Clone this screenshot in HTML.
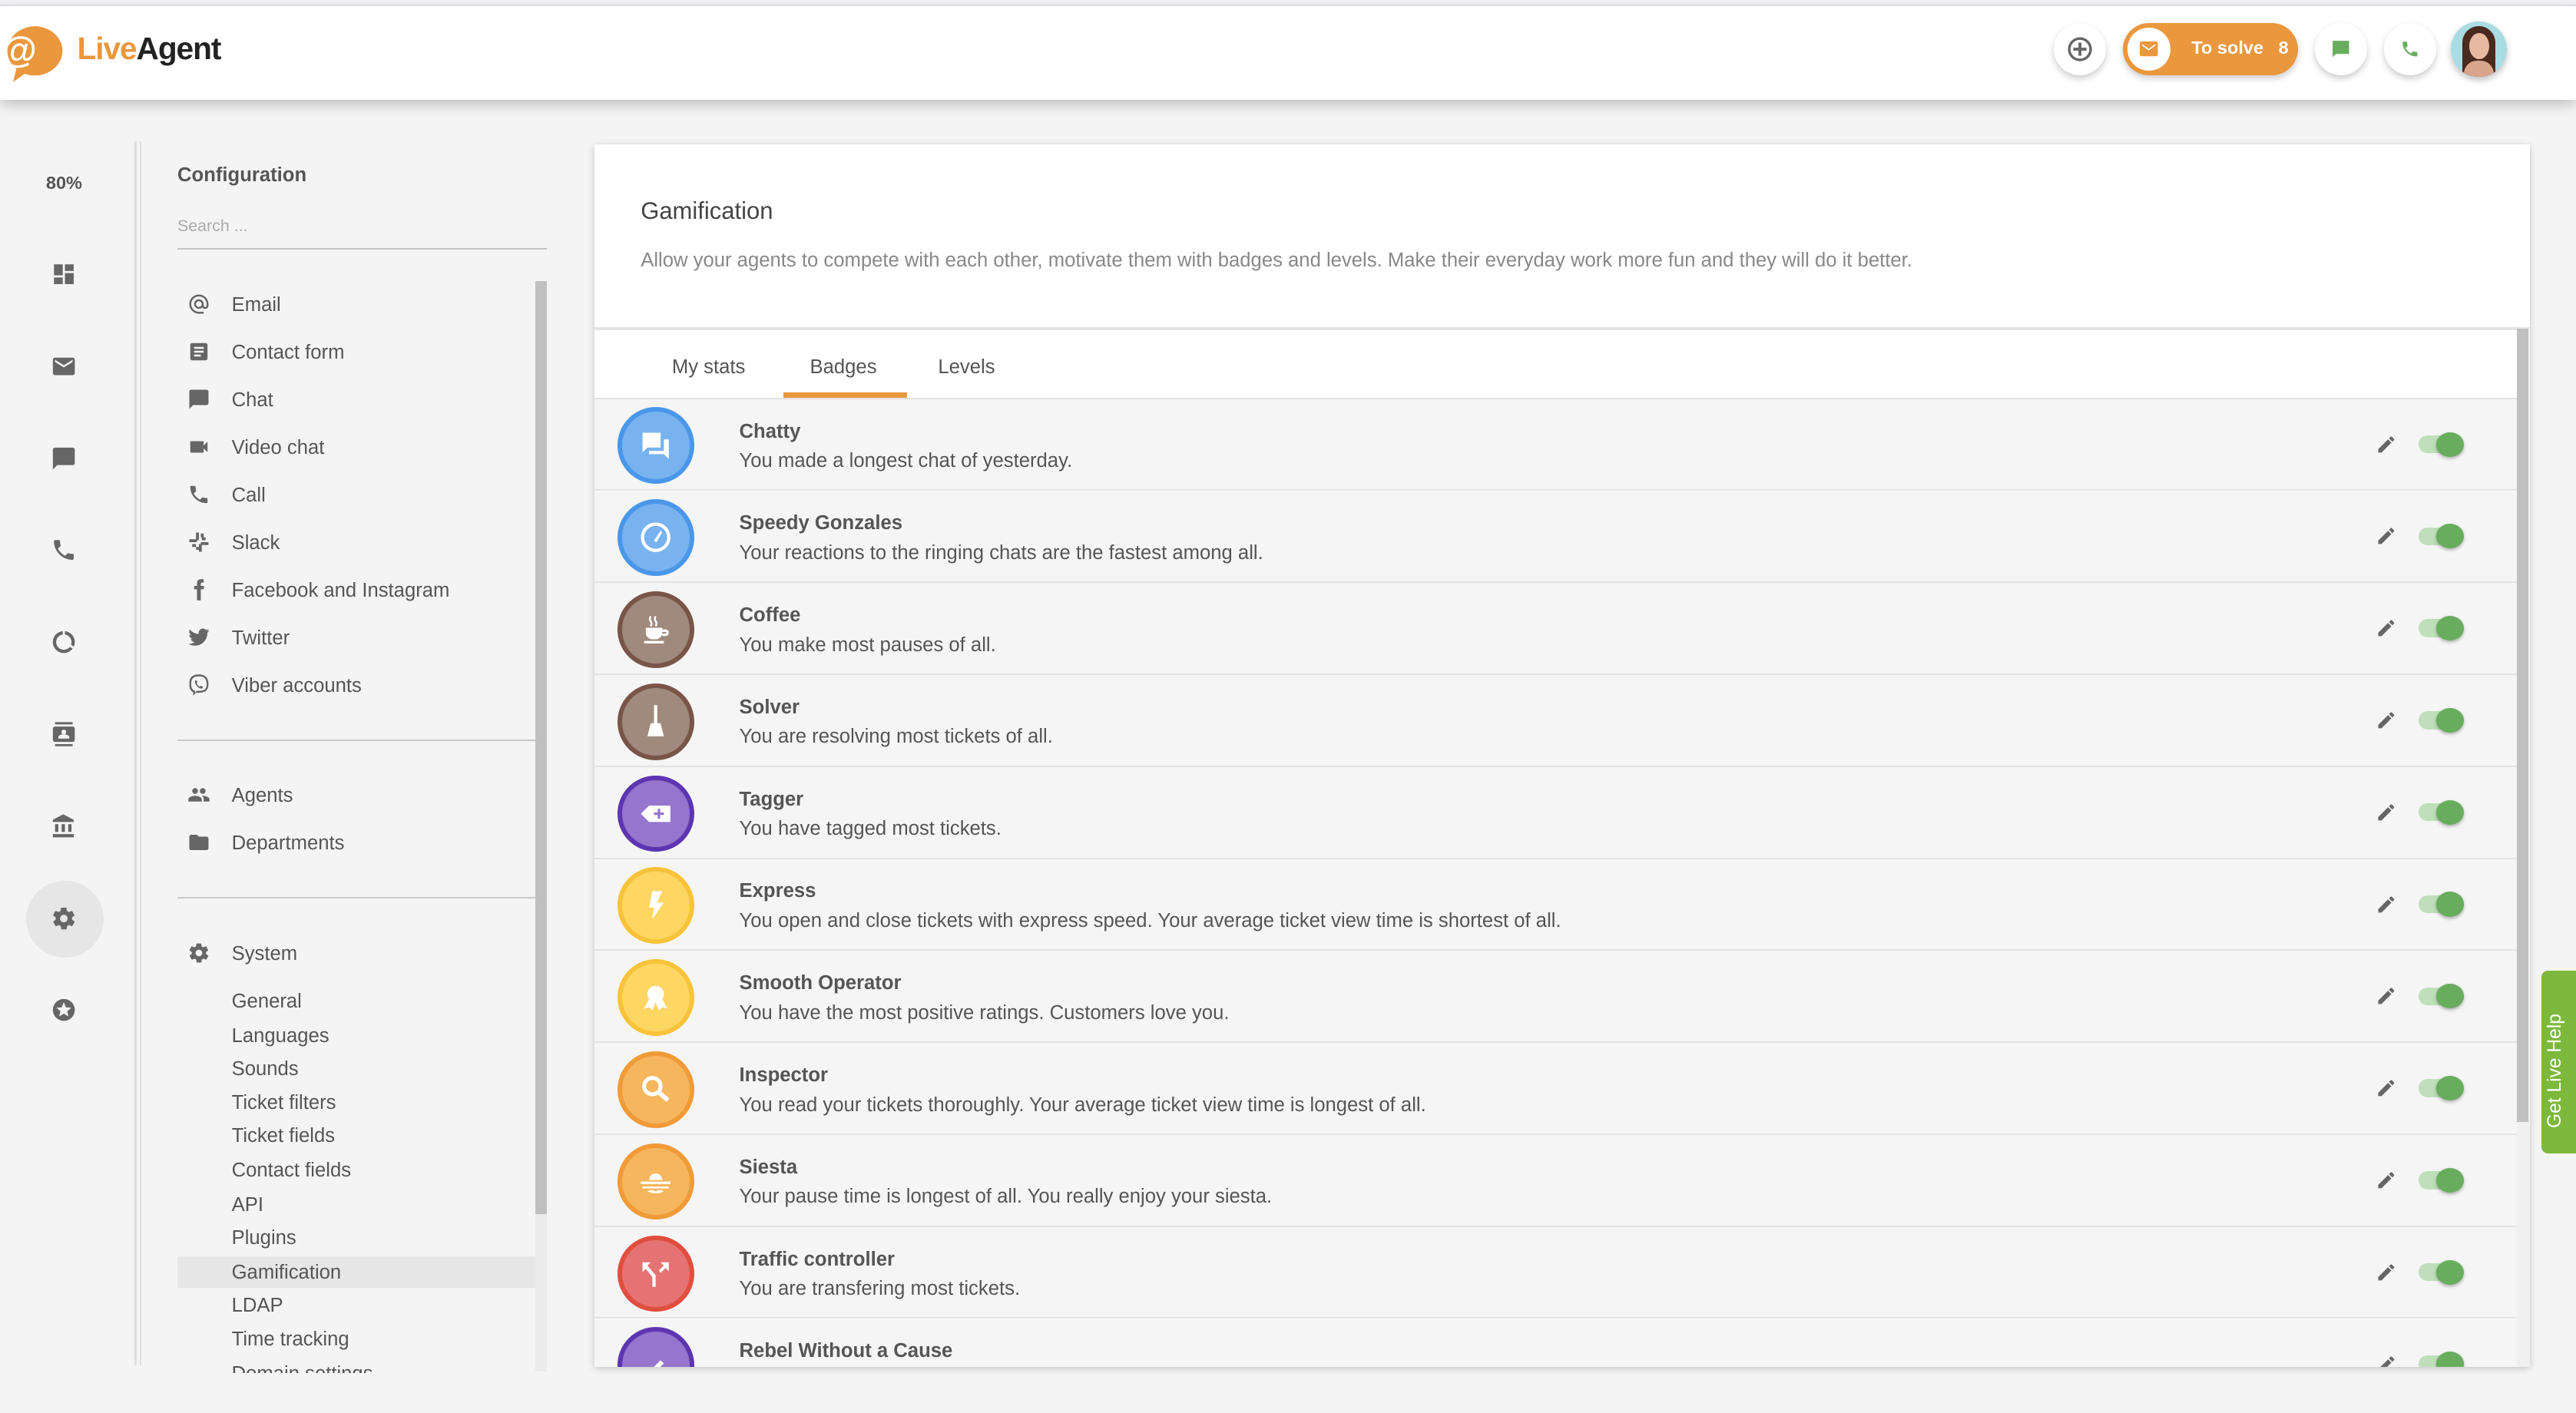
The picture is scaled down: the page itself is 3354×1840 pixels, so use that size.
<!DOCTYPE html>
<html><head><meta charset="utf-8"><style>
html,body{margin:0;padding:0;}
body{width:3354px;height:1840px;overflow:hidden;background:#f4f4f4;font-family:"Liberation Sans",sans-serif;}
#w{zoom:2.139;width:1568px;height:860px;position:relative;overflow:hidden;color:#555;}
.abs{position:absolute;}
.hdr{left:0;top:3px;width:1568px;height:57px;background:#fff;border-top:1px solid #dcdce4;box-shadow:0 3px 8px rgba(0,0,0,.22);z-index:5;}
.cb{position:absolute;width:32px;height:32px;border-radius:50%;background:#fff;box-shadow:0 2px 4px rgba(0,0,0,.2);display:flex;align-items:center;justify-content:center;}
.rail svg{position:absolute;left:31px;width:16px;height:16px;fill:#666;}
.li{position:absolute;left:141px;font-size:12px;color:#555;margin-top:1px;}
.li2{position:absolute;left:141px;font-size:12px;color:#555;margin-top:1px;}
.ic{position:absolute;left:114px;width:14px;height:14px;fill:#666;}
.row{position:absolute;left:362px;width:1170px;height:55px;background:#f5f5f5;border-bottom:1px solid #e2e2e2;}
.row .c{position:absolute;left:14px;top:5px;width:41px;height:41px;border-radius:50%;border:3px solid;display:flex;align-items:center;justify-content:center;}
.row .c svg{width:24px;height:24px;fill:#fff;}
.row .n{position:absolute;left:88px;top:13px;font-size:12px;font-weight:bold;color:#555;}
.row .d{position:absolute;left:88px;top:31px;font-size:12px;color:#555;}
.row .p{position:absolute;left:1084px;top:21px;width:13px;height:13px;fill:#666;}
.row .t{position:absolute;left:1110px;top:22px;width:28px;height:11px;border-radius:6px;background:#bfdfbb;}
.row .t:after{content:"";position:absolute;left:11px;top:-2px;width:17px;height:15px;border-radius:50%;background:#68ad5e;box-shadow:0 1px 2px rgba(0,0,0,.3);}
</style></head><body><div id="w">
<div class="abs hdr">
 <svg class="abs" style="left:1px;top:11px" width="40" height="36" viewBox="0 0 40 36"><path d="M20 1a17 15 0 1 1 -6 29l-7 5 2-8A17 15 0 0 1 20 1z" fill="#ea973d"/><text x="0" y="23" font-size="22" font-family="Liberation Sans" fill="#fff" font-weight="bold">@</text></svg>
 <div class="abs" style="left:47px;top:15px;font-size:19px;font-weight:bold;letter-spacing:-0.5px"><span style="color:#ea973d">Live</span><span style="color:#222">Agent</span></div>
 <div class="cb" style="left:1250px;top:10px"><svg width="16" height="16" viewBox="0 0 16 16"><circle cx="8" cy="8" r="6.5" fill="none" stroke="#666" stroke-width="1.6"/><path d="M8 4v8M4 8h8" stroke="#666" stroke-width="1.8"/></svg></div>
 <div class="abs" style="left:1292px;top:10px;width:107px;height:32px;border-radius:16px;background:#ea973d;box-shadow:0 2px 4px rgba(0,0,0,.2)">
  <div style="position:absolute;left:3px;top:3px;width:26px;height:26px;border-radius:50%;background:#fff;display:flex;align-items:center;justify-content:center"><svg width="11" height="9" viewBox="0 0 11 9"><rect width="11" height="9" rx="1" fill="#ea973d"/><path d="M1.5 2l4 3 4-3" stroke="#fff" fill="none" stroke-width=".8"/></svg></div>
  <div style="position:absolute;left:42px;top:9px;font-size:11px;font-weight:bold;color:#fff">To solve &nbsp;&nbsp;8</div></div>
 <div class="cb" style="left:1409px;top:10px"><svg width="12" height="12" viewBox="0 0 12 12"><path d="M1 1h10v8H3l-2 2z" fill="#68ad5e"/></svg></div>
 <div class="cb" style="left:1451px;top:10px"><svg width="12" height="12" viewBox="0 0 24 24"><path d="M6.6 10.8c1.4 2.8 3.8 5.1 6.6 6.6l2.2-2.2c.3-.3.7-.4 1-.2 1.1.4 2.3.6 3.6.6.6 0 1 .4 1 1V20c0 .6-.4 1-1 1C10.6 21 3 13.4 3 4c0-.6.4-1 1-1h3.5c.6 0 1 .4 1 1 0 1.3.2 2.5.6 3.6.1.3 0 .7-.2 1z" fill="#68ad5e"/></svg></div>
 <div class="abs" style="left:1492px;top:9px;width:34px;height:34px;border-radius:50%;background:#a9dde3;overflow:hidden;box-shadow:0 2px 4px rgba(0,0,0,.25)"><div style="position:absolute;left:7px;top:3px;width:20px;height:34px;border-radius:10px 10px 0 0;background:#4a2a1e"></div><div style="position:absolute;left:11px;top:7px;width:12px;height:16px;border-radius:50%;background:#e7b9a0"></div><div style="position:absolute;left:8px;top:24px;width:18px;height:12px;border-radius:8px 8px 0 0;background:#d8a48c"></div></div>
</div>
<div class="rail">
 <div class="abs" style="left:28px;top:105px;font-size:11px;font-weight:bold;color:#555">80%</div>
 <svg style="top:159px" viewBox="0 0 24 24"><path d="M3 13h8V3H3zm0 8h8v-6H3zm10 0h8V11h-8zm0-18v6h8V3z"/></svg>
 <svg style="top:215px" viewBox="0 0 24 24"><path d="M20 4H4c-1.1 0-2 .9-2 2v12c0 1.1.9 2 2 2h16c1.1 0 2-.9 2-2V6c0-1.1-.9-2-2-2zm0 4l-8 5-8-5V6l8 5 8-5z"/></svg>
 <svg style="top:271px" viewBox="0 0 24 24"><path d="M20 2H4c-1.1 0-2 .9-2 2v18l4-4h14c1.1 0 2-.9 2-2V4c0-1.1-.9-2-2-2z"/></svg>
 <svg style="top:327px" viewBox="0 0 24 24"><path d="M6.6 10.8c1.4 2.8 3.8 5.1 6.6 6.6l2.2-2.2c.3-.3.7-.4 1-.2 1.1.4 2.3.6 3.6.6.6 0 1 .4 1 1V20c0 .6-.4 1-1 1C10.6 21 3 13.4 3 4c0-.6.4-1 1-1h3.5c.6 0 1 .4 1 1 0 1.3.2 2.5.6 3.6.1.3 0 .7-.2 1z"/></svg>
 <svg style="top:383px" viewBox="0 0 24 24"><path d="M13 2.05v3.03c3.39.49 6 3.39 6 6.92 0 .9-.18 1.750-.48 2.54l2.6 1.53c.56-1.24.88-2.62.88-4.070 0-5.18-3.95-9.45-9-9.95zM12 19c-3.87 0-7-3.13-7-7 0-3.530 2.61-6.43 6-6.92V2.05c-5.06.5-9 4.76-9 9.95 0 5.52 4.47 10 9.99 10 3.31 0 6.24-1.61 8.06-4.09l-2.6-1.53C16.17 17.98 14.21 19 12 19z"/></svg>
 <svg style="top:439px" viewBox="0 0 24 24"><path d="M4 1h16v2H4zm0 20h16v2H4zM20 5H4c-1.1 0-2 .9-2 2v10c0 1.1.9 2 2 2h16c1.1 0 2-.9 2-2V7c0-1.1-.9-2-2-2zm-8 2.8a2.2 2.2 0 1 1 0 4.4 2.2 2.2 0 0 1 0-4.4zM17 16H7v-1.5c0-1.7 3.3-2.5 5-2.5s5 .8 5 2.5z"/></svg>
 <svg style="top:495px" viewBox="0 0 24 24"><path d="M4 10v7h3v-7zm6 0v7h3v-7zM2 22h19v-3H2zm14-12v7h3v-7zM11.5 1L2 6v2h19V6z"/></svg>
 <div class="abs" style="left:16px;top:536px;width:47px;height:47px;border-radius:50%;background:#e6e6e6"></div>
 <svg style="top:551px;z-index:1" viewBox="0 0 24 24"><path d="M19.4 13c0-.3.1-.6.1-1s0-.7-.1-1l2.1-1.6c.2-.2.2-.4.1-.6l-2-3.5c-.1-.2-.4-.3-.6-.2l-2.5 1c-.5-.4-1.1-.7-1.7-1l-.4-2.6c0-.2-.2-.4-.5-.4h-4c-.2 0-.5.2-.5.4l-.4 2.6c-.6.3-1.2.6-1.7 1l-2.5-1c-.2-.1-.5 0-.6.2l-2 3.5c-.1.2-.1.5.1.6L4.6 11c0 .3-.1.6-.1 1s0 .7.1 1l-2.1 1.6c-.2.2-.2.4-.1.6l2 3.5c.1.2.4.3.6.2l2.5-1c.5.4 1.1.7 1.7 1l.4 2.6c0 .2.2.4.5.4h4c.2 0 .5-.2.5-.4l.4-2.6c.6-.3 1.2-.6 1.7-1l2.5 1c.2.1.5 0 .6-.2l2-3.5c.1-.2.1-.5-.1-.6zM12 15.5a3.5 3.5 0 1 1 0-7 3.5 3.5 0 0 1 0 7z"/></svg>
 <svg style="top:607px" viewBox="0 0 24 24"><path d="M12 2a10 10 0 1 0 0 20 10 10 0 0 0 0-20zm4.2 16L12 15.4 7.8 18l1.1-4.8-3.7-3.2 4.9-.4L12 5l1.9 4.6 4.9.4-3.7 3.2z"/></svg>
</div>
<div class="abs" style="left:82px;top:86px;width:1px;height:745px;background:#ddd"></div>
<div class="abs" style="left:85px;top:86px;width:1px;height:745px;background:#ddd"></div>
<div class="abs" style="left:108px;top:100px;font-size:12px;font-weight:bold;color:#555">Configuration</div>
<div class="abs" style="left:108px;top:132px;font-size:10px;color:#aaa">Search ...</div>
<div class="abs" style="left:108px;top:151px;width:225px;height:1px;background:#c4c4c4"></div>
<div class="abs" style="left:326px;top:171px;width:7px;height:664px;background:#ebebeb"></div>
<div class="abs" style="left:326px;top:171px;width:7px;height:568px;background:#c0c0c0"></div>
<svg class="ic" style="top:178px" viewBox="0 0 24 24"><path d="M12 2a10 10 0 0 0 0 20h5v-2h-5a8 8 0 1 1 8-8v1.4c0 .8-.7 1.6-1.5 1.6S17 14.2 17 13.4V12a5 5 0 1 0-1.5 3.5c.7.9 1.7 1.5 3 1.5 2 0 3.5-1.6 3.5-3.6V12c0-5.5-4.5-10-10-10zm0 13a3 3 0 1 1 0-6 3 3 0 0 1 0 6z"/></svg><div class="li" style="top:178px">Email</div>
<svg class="ic" style="top:207px" viewBox="0 0 24 24"><path d="M19 3H5a2 2 0 0 0-2 2v14a2 2 0 0 0 2 2h14a2 2 0 0 0 2-2V5a2 2 0 0 0-2-2zm-5 14H7v-2h7zm3-4H7v-2h10zm0-4H7V7h10z"/></svg><div class="li" style="top:207px">Contact form</div>
<svg class="ic" style="top:236px" viewBox="0 0 24 24"><path d="M20 2H4c-1.1 0-2 .9-2 2v18l4-4h14c1.1 0 2-.9 2-2V4c0-1.1-.9-2-2-2z"/></svg><div class="li" style="top:236px">Chat</div>
<svg class="ic" style="top:265px" viewBox="0 0 24 24"><path d="M17 10.5V7c0-.6-.4-1-1-1H4c-.6 0-1 .4-1 1v10c0 .6.4 1 1 1h12c.6 0 1-.4 1-1v-3.5l4 4v-11z"/></svg><div class="li" style="top:265px">Video chat</div>
<svg class="ic" style="top:294px" viewBox="0 0 24 24"><path d="M6.6 10.8c1.4 2.8 3.8 5.1 6.6 6.6l2.2-2.2c.3-.3.7-.4 1-.2 1.1.4 2.3.6 3.6.6.6 0 1 .4 1 1V20c0 .6-.4 1-1 1C10.6 21 3 13.4 3 4c0-.6.4-1 1-1h3.5c.6 0 1 .4 1 1 0 1.3.2 2.5.6 3.6.1.3 0 .7-.2 1z"/></svg><div class="li" style="top:294px">Call</div>
<svg class="ic" style="top:323px" viewBox="0 0 24 24"><path d="M9 2h3v8H9zm3 12h3v8h-3zM2 9h8v3H2zm12 3h8v3h-8zM5 14h4v3H5zm10-7h4v3h-4zM9 17h3v3H9zm5-14h3v4h-3z"/></svg><div class="li" style="top:323px">Slack</div>
<svg class="ic" style="top:352px" viewBox="0 0 24 24"><path d="M14 8V6c0-1 .5-1.5 1.5-1.5H17V1h-3c-3 0-4 2-4 4.5V8H7v3.5h3V23h4V11.5h3l.5-3.5z"/></svg><div class="li" style="top:352px">Facebook and Instagram</div>
<svg class="ic" style="top:381px" viewBox="0 0 24 24"><path d="M23 5c-.8.4-1.7.6-2.6.7.9-.6 1.6-1.4 2-2.5-.9.5-1.9.9-2.9 1.1A4.5 4.5 0 0 0 11.8 8.4 12.8 12.8 0 0 1 2.5 3.7a4.5 4.5 0 0 0 1.4 6c-.7 0-1.4-.2-2-.6 0 2.2 1.6 4 3.6 4.500-.7.2-1.4.2-2 .1.6 1.8 2.2 3.1 4.2 3.1A9 9 0 0 1 1 18.6 12.8 12.8 0 0 0 8 20.6c8.3 0 12.8-6.9 12.8-12.8v-.6c.9-.6 1.6-1.4 2.2-2.2z"/></svg><div class="li" style="top:381px">Twitter</div>
<svg class="ic" style="top:410px" viewBox="0 0 24 24"><path d="M12 1C5 1 2 4 2 11c0 4 1 7 4 8.5V23l3-3c1 .1 2 .1 3 .1 7 0 10-3 10-9.1S19 1 12 1zm0 17h-2l-2 2v-2c-3-1-4-3-4-7 0-5.5 2.3-8 8-8s8 2.5 8 8-2.3 7-8 7z"/><path d="M9 7c.5 0 1.5 2 1.3 2.5l-.7.7c.5 1.5 2 3 3.4 3.5l.7-.7c.5-.2 2.5.8 2.5 1.3 0 1-1 1.7-2 1.500-3-.7-5.5-3.2-6.2-6.2C7.8 8 8 7 9 7z"/></svg><div class="li" style="top:410px">Viber accounts</div>
<div class="abs" style="left:108px;top:450px;width:218px;height:1px;background:#c8c8c8"></div>
<svg class="ic" style="top:477px" viewBox="0 0 24 24"><path d="M16 11a3 3 0 1 0 0-6 3 3 0 0 0 0 6zm-8 0a3 3 0 1 0 0-6 3 3 0 0 0 0 6zm0 2c-2.3 0-7 1.2-7 3.5V19h14v-2.5C15 14.2 10.3 13 8 13zm8 0h-1c1.2.8 2 2 2 3.5V19h6v-2.5c0-2.3-4.7-3.5-7-3.5z"/></svg><div class="li" style="top:477px">Agents</div>
<svg class="ic" style="top:506px" viewBox="0 0 24 24"><path d="M10 4H4c-1.1 0-2 .9-2 2v12c0 1.1.9 2 2 2h16c1.1 0 2-.9 2-2V8c0-1.1-.9-2-2-2h-8z"/></svg><div class="li" style="top:506px">Departments</div>
<div class="abs" style="left:108px;top:546px;width:218px;height:1px;background:#c8c8c8"></div>
<svg class="ic" style="top:573px" viewBox="0 0 24 24"><path d="M19.4 13c0-.3.1-.6.1-1s0-.7-.1-1l2.1-1.6c.2-.2.2-.4.1-.6l-2-3.5c-.1-.2-.4-.3-.6-.2l-2.5 1c-.5-.4-1.1-.7-1.7-1l-.4-2.6c0-.2-.2-.4-.5-.4h-4c-.2 0-.5.2-.5.4l-.4 2.6c-.6.3-1.2.6-1.7 1l-2.5-1c-.2-.1-.5 0-.6.2l-2 3.5c-.1.2-.1.5.1.6L4.6 11c0 .3-.1.6-.1 1s0 .7.1 1l-2.1 1.6c-.2.2-.2.4-.1.6l2 3.5c.1.2.4.3.6.2l2.5-1c.5.4 1.1.7 1.7 1l.4 2.6c0 .2.2.4.5.4h4c.2 0 .5-.2.5-.4l.4-2.6c.6-.3 1.2-.6 1.7-1l2.5 1c.2.1.5 0 .6-.2l2-3.5c.1-.2.1-.5-.1-.6zM12 15.5a3.5 3.5 0 1 1 0-7 3.5 3.5 0 0 1 0 7z"/></svg><div class="li" style="top:573px">System</div>
<div class="abs" style="left:108px;top:765px;width:218px;height:19px;background:#e6e6e6"></div>
<div class="li2" style="top:602px">General</div>
<div class="li2" style="top:623px">Languages</div>
<div class="li2" style="top:643px">Sounds</div>
<div class="li2" style="top:664px">Ticket filters</div>
<div class="li2" style="top:684px">Ticket fields</div>
<div class="li2" style="top:705px">Contact fields</div>
<div class="li2" style="top:726px">API</div>
<div class="li2" style="top:746px">Plugins</div>
<div class="li2" style="top:767px">Gamification</div>
<div class="li2" style="top:787px">LDAP</div>
<div class="li2" style="top:808px">Time tracking</div>
<div class="abs" style="left:108px;top:826px;width:218px;height:10px;overflow:hidden"><div class="li2" style="left:33px;top:3px">Domain settings</div></div>

<div class="abs" style="left:362px;top:88px;width:1178px;height:744px;background:#fff;box-shadow:0 1px 4px rgba(0,0,0,.2);overflow:hidden">
 <div class="abs" style="left:28px;top:32px;font-size:14.5px;color:#444">Gamification</div>
 <div class="abs" style="left:28px;top:64px;font-size:12px;color:#888">Allow your agents to compete with each other, motivate them with badges and levels. Make their everyday work more fun and they will do it better.</div>
 <div class="abs" style="left:0;top:111px;width:1178px;height:2px;background:#e4e4e4"></div>
 <div class="abs" style="left:47px;top:129px;font-size:12px;color:#555">My stats</div>
 <div class="abs" style="left:131px;top:129px;font-size:12px;color:#555">Badges</div>
 <div class="abs" style="left:209px;top:129px;font-size:12px;color:#555">Levels</div>
 <div class="abs" style="left:115px;top:151px;width:75px;height:3px;background:#ea973d"></div>
 <div class="abs" style="left:0;top:154px;width:1170px;height:1px;background:#e2e2e2"></div>
 <div class="abs" style="left:1170px;top:112px;width:8px;height:632px;background:#f0f0f0"></div>
 <div class="abs" style="left:1170px;top:112px;width:7px;height:483px;background:#c0c0c0"></div>
</div>
<div id="rows">
<div class="row" style="top:243px"><div class="c" style="background:#78b3f0;border-color:#4a97ea"><svg viewBox="0 0 24 24"><path d="M4 4h11v9H7l-3 3zM17 8h3v12l-3-3H8v-2h9z"/></svg></div><div class="n">Chatty</div><div class="d">You made a longest chat of yesterday.</div></div>
<div class="row" style="top:299px"><div class="c" style="background:#78b3f0;border-color:#4a97ea"><svg viewBox="0 0 24 24"><circle cx="12" cy="12" r="8" fill="none" stroke="#fff" stroke-width="2"/><path d="M11 14l4-6 1 1-3.5 6z"/></svg></div><div class="n">Speedy Gonzales</div><div class="d">Your reactions to the ringing chats are the fastest among all.</div></div>
<div class="row" style="top:355px"><div class="c" style="background:#a08a7e;border-color:#795548"><svg viewBox="0 0 24 24"><path d="M6 11h10v3a4 4 0 0 1-4 4h-2a4 4 0 0 1-4-4zm10 1h2a2 2 0 0 1 0 4h-2v-1.5h2a.5.5 0 0 0 0-1h-2zM5 19h12v1.5H5z"/><path d="M9 4q-1 1.5 0 3t0 3M12 4q-1 1.5 0 3t0 3" stroke="#fff" fill="none" stroke-width="1.2"/></svg></div><div class="n">Coffee</div><div class="d">You make most pauses of all.</div></div>
<div class="row" style="top:411px"><div class="c" style="background:#a08a7e;border-color:#795548"><svg viewBox="0 0 24 24"><path d="M11 2h2v11h-2zM9 13h6l2 8H7z"/></svg></div><div class="n">Solver</div><div class="d">You are resolving most tickets of all.</div></div>
<div class="row" style="top:467px"><div class="c" style="background:#9575cd;border-color:#5e35b1"><svg viewBox="0 0 24 24"><path d="M8 7h13v10H8l-5-5z"/><path d="M14 9v6M11 12h6" stroke="#9575cd" stroke-width="1.5"/></svg></div><div class="n">Tagger</div><div class="d">You have tagged most tickets.</div></div>
<div class="row" style="top:523px"><div class="c" style="background:#fdd663;border-color:#f8c33a"><svg viewBox="0 0 24 24"><path d="M10 3h6l-3 7h4l-7 10 1-7H8z"/></svg></div><div class="n">Express</div><div class="d">You open and close tickets with express speed. Your average ticket view time is shortest of all.</div></div>
<div class="row" style="top:579px"><div class="c" style="background:#fdd663;border-color:#f8c33a"><svg viewBox="0 0 24 24"><circle cx="12" cy="10" r="5"/><path d="M8 13l-3 6 3-1 2 2 2-5zm8 0l3 6-3-1-2 2-2-5z"/></svg></div><div class="n">Smooth Operator</div><div class="d">You have the most positive ratings. Customers love you.</div></div>
<div class="row" style="top:635px"><div class="c" style="background:#f6b65e;border-color:#f19a38"><svg viewBox="0 0 24 24"><circle cx="10" cy="10" r="5" fill="none" stroke="#fff" stroke-width="2.4"/><path d="M13.5 13.5l6 5" stroke="#fff" stroke-width="2.8"/></svg></div><div class="n">Inspector</div><div class="d">You read your tickets thoroughly. Your average ticket view time is longest of all.</div></div>
<div class="row" style="top:691px"><div class="c" style="background:#f6b65e;border-color:#f19a38"><svg viewBox="0 0 24 24"><path d="M8 11a4 4 0 0 1 8 0zM3 12h18v1.5H3zM4 15h16v1.2H4zM7 18c2-1 3-1 5 0 2-1 3-1 5 0-3 1.5-7 1.5-10 0z"/></svg></div><div class="n">Siesta</div><div class="d">Your pause time is longest of all. You really enjoy your siesta.</div></div>
<div class="row" style="top:747px"><div class="c" style="background:#e57373;border-color:#e04e3e"><svg viewBox="0 0 24 24"><path d="M4 5h5l-2 2 5 6v7h-2v-6L6 9l-2 2zM20 5h-5l2 2-3 3 1 1.5 3-3 2 2z"/></svg></div><div class="n">Traffic controller</div><div class="d">You are transfering most tickets.</div></div>
<div class="row" style="top:803px;height:29px;overflow:hidden;border:0"><div class="c" style="background:#9575cd;border-color:#5e35b1"><svg viewBox="0 0 24 24"><path d="M9 15l6-6 2 2-6 6z"/></svg></div><div class="n">Rebel Without a Cause</div><svg class="p" viewBox="0 0 24 24"><path d="M3 17.25V21h3.75L17.8 9.94l-3.75-3.75zM20.7 7.04a1 1 0 0 0 0-1.41l-2.34-2.34a1 1 0 0 0-1.41 0l-1.83 1.83 3.75 3.75z"/></svg><div class="t"></div></div>
</div>
<div class="abs" style="left:1547px;top:591px;width:21px;height:111px;background:#7cb83b;border-radius:4px 0 0 4px"><div style="position:absolute;left:2px;top:96px;transform:rotate(-90deg);transform-origin:0 0;font-size:11.5px;color:#fff;white-space:nowrap">Get Live Help</div></div>
<script>
document.querySelectorAll('.row').forEach(function(r,i){if(i<10){r.insertAdjacentHTML('beforeend','<svg class="p" viewBox="0 0 24 24"><path d="M3 17.25V21h3.75L17.8 9.94l-3.75-3.75zM20.7 7.04a1 1 0 0 0 0-1.41l-2.34-2.34a1 1 0 0 0-1.41 0l-1.83 1.83 3.75 3.75z"/></svg><div class="t"></div>');}});
</script>
</div></body></html>
